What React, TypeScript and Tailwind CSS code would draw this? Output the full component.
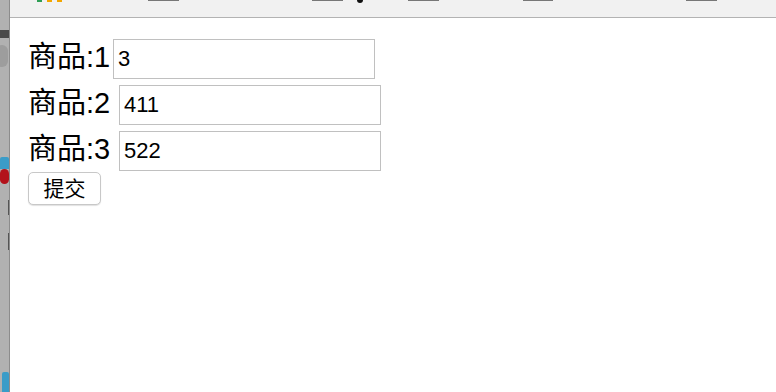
import { useState } from 'react';

const rows = [
  { label: '商品:1', value: '3', labelWidth: 'w-[85px]' },
  { label: '商品:2', value: '411', labelWidth: 'w-[91px]' },
  { label: '商品:3', value: '522', labelWidth: 'w-[91px]' },
];

export default function App() {
  const [values, setValues] = useState(rows.map((r) => r.value));

  return (
    <div className="flex h-[392px] w-[776px] overflow-hidden bg-white">
      {/* window edge on the left, mostly cut off */}
      <div className="flex h-full w-[10px] shrink-0 flex-col border-r border-[#8c8c8c] bg-[#b1b1b1]">
        <div className="mt-[30px] h-[8px] bg-[#4a4a4a]" />
        <div className="ml-[-4px] mt-[7px] h-[22px] w-[12px] rounded-full bg-[#9d9d9d]" />
        <div className="mt-[90px] h-[12px] rounded-t-[2px] bg-[#3a9cc8]" />
        <div className="h-[15px] rounded-full bg-[#b3121b]" />
        <div className="ml-[8px] mt-[16px] h-[15px] w-[1px] bg-[#555]" />
        <div className="ml-[8px] mt-[18px] h-[17px] w-[1px] bg-[#555]" />
        <div className="ml-[2px] mt-auto h-[20px] w-[7px] rounded-t-[2px] bg-[#3a9cc8]" />
      </div>

      <div className="flex flex-1 flex-col">
        {/* bookmarks strip, cut off at the top */}
        <div className="flex h-[18px] shrink-0 items-start border-b border-[#b3b3b3] bg-[#f1f1f1] pl-[27px]">
          <div className="flex gap-[5px]">
            <span className="h-[2px] w-[5px] bg-[#2e9e55]" />
            <span className="h-[2px] w-[5px] bg-[#f2a600]" />
            <span className="h-[2px] w-[5px] bg-[#f2a600]" />
          </div>
          <span className="ml-[86px] h-[1px] w-[31px] bg-[#777]" />
          <span className="ml-[133px] h-[1px] w-[31px] bg-[#777]" />
          <span className="ml-[14px] mt-[-3px] h-[6px] w-[6px] rounded-full bg-[#111]" />
          <span className="ml-[45px] h-[1px] w-[31px] bg-[#777]" />
          <span className="ml-[84px] h-[1px] w-[30px] bg-[#777]" />
          <span className="ml-[133px] h-[1px] w-[31px] bg-[#777]" />
        </div>

        <form
          className="flex flex-col items-start pl-[18px] pt-[21px] font-['Liberation_Sans','Noto_Sans_CJK_SC',sans-serif] text-black"
          onSubmit={(e) => e.preventDefault()}
        >
          <div className="flex flex-col gap-[6px]">
            {rows.map((row, i) => (
              <div key={row.label} className="flex h-[40px] items-center">
                <span className={`${row.labelWidth} pb-1 text-[29px] leading-none`}>{row.label}</span>
                <input
                  className="h-[40px] w-[262px] border border-[#c0c0c0] pl-[4px] text-[22px] outline-none"
                  value={values[i]}
                  onChange={(e) => {
                    const next = [...values];
                    next[i] = e.target.value;
                    setValues(next);
                  }}
                />
              </div>
            ))}
          </div>
          <button
            type="submit"
            className="mt-[1px] flex h-[33px] w-[73px] items-center justify-center rounded-[5px] border border-[#c8c8c8] bg-white text-[21px] leading-none shadow-[0_1px_1px_rgba(0,0,0,0.12)]"
          >
            提交
          </button>
        </form>
      </div>
    </div>
  );
}
